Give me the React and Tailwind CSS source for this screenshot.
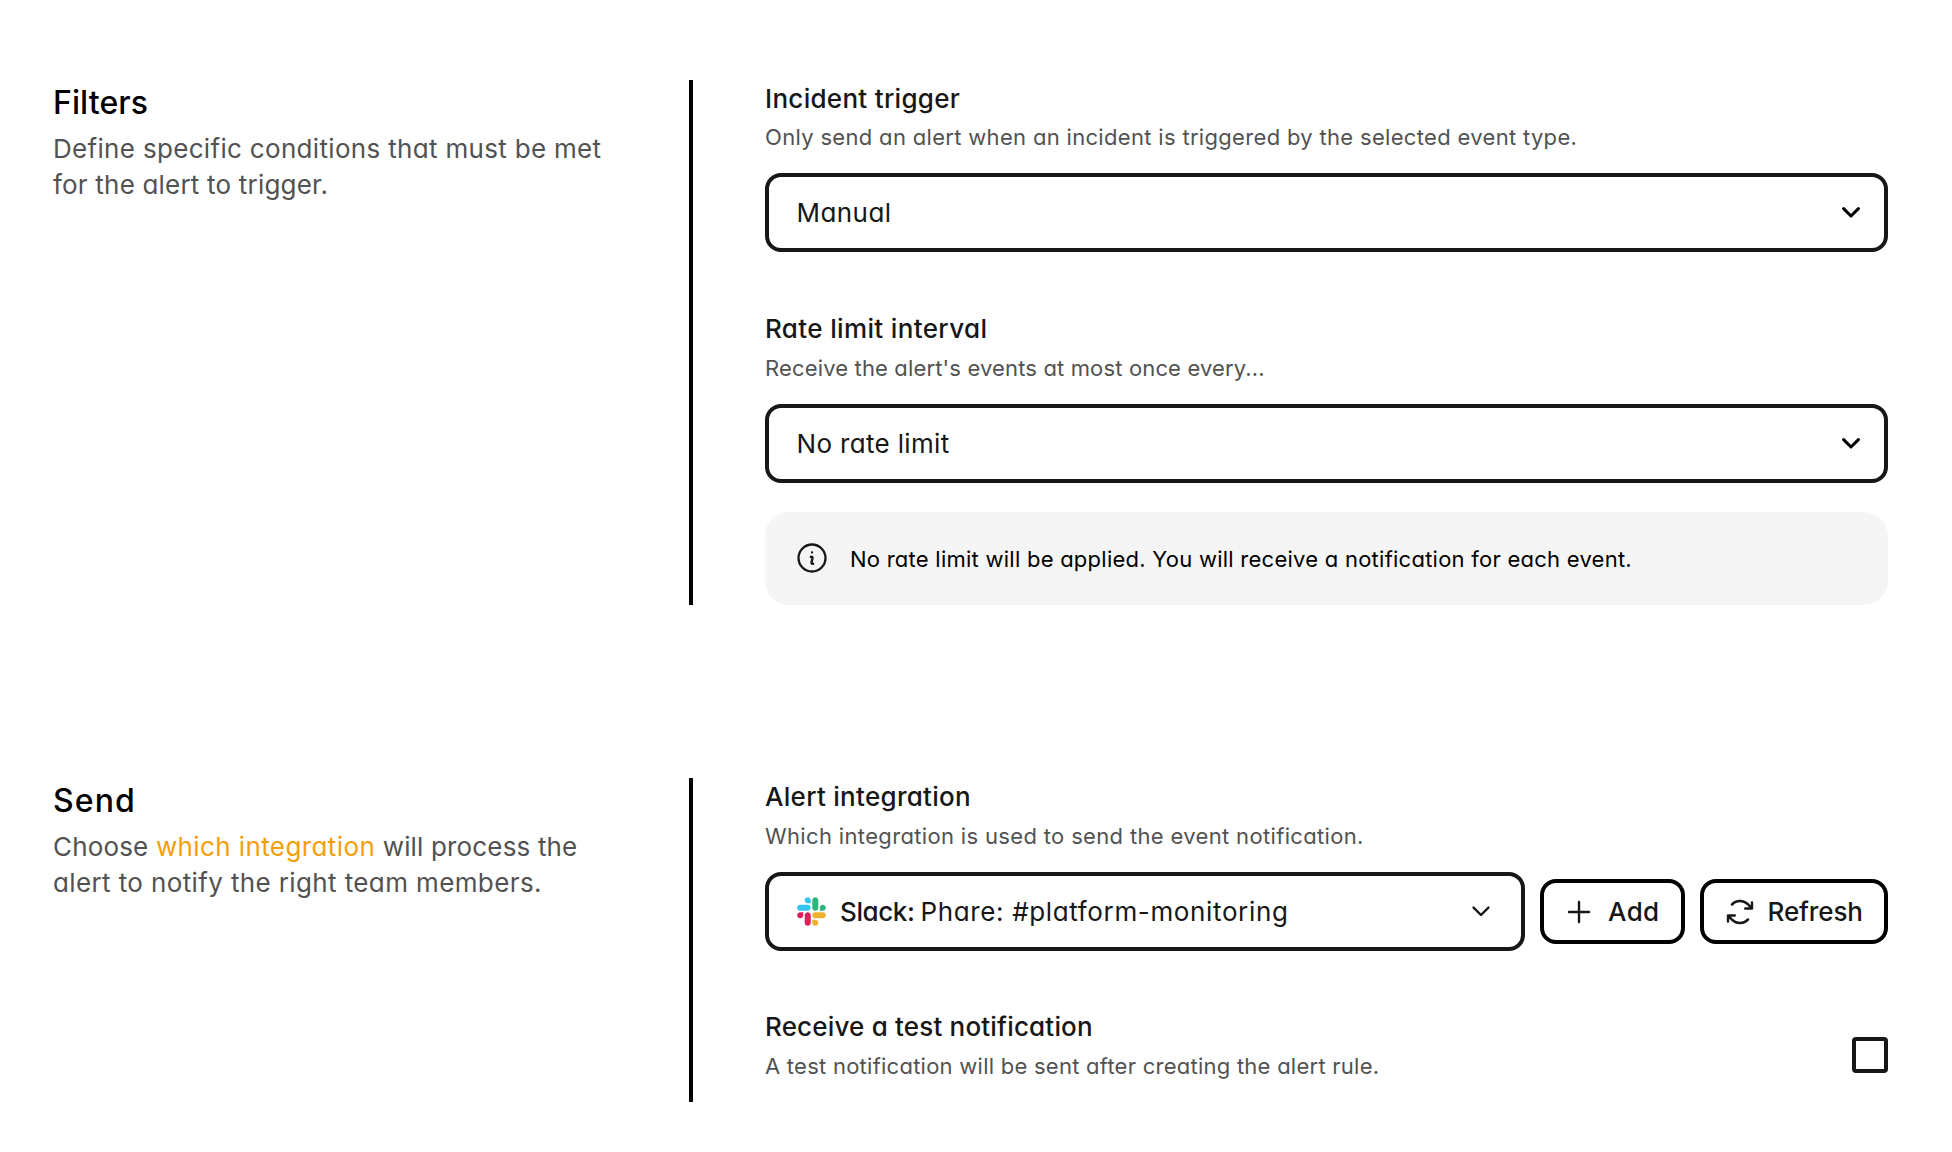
import React from "react";

function Chevron({ className, stroke }) {
  return (
    <svg viewBox="0 0 18 11" className={className} fill="none" stroke="currentColor" strokeWidth={stroke} strokeLinecap="round" strokeLinejoin="round">
      <path d="M1.6 1.6 9 9 16.4 1.6" />
    </svg>
  );
}

function OutlineIcon({ d, className, stroke = 1.8 }) {
  return (
    <svg viewBox="0 0 24 24" className={className} fill="none" stroke="currentColor" strokeWidth={stroke} strokeLinecap="round" strokeLinejoin="round">
      <path d={d} />
    </svg>
  );
}

const INFO = "m11.25 11.25.041-.02a.75.75 0 0 1 1.063.852l-.708 2.836a.75.75 0 0 0 1.063.853l.041-.021M21 12a9 9 0 1 1-18 0 9 9 0 0 1 18 0Zm-9-3.75h.008v.008H12V8.25Z";
const PLUS = "M12 4.5v15m7.5-7.5h-15";
const REFRESH = "M15.9 9.35H21V4.8M8.1 14.65H3v4.55M3 14.65l3.166 3.185A8.25 8.25 0 0 0 18.1 17.55M5.9 6.45A8.25 8.25 0 0 1 17.834 6.165L21 9.35";

function SlackLogo() {
  return (
    <svg viewBox="0 0 127 127" className="size-[29px] shrink-0">
      <path fill="#E01E5A" d="M27.2 80c0 7.3-5.9 13.2-13.2 13.2C6.7 93.2.8 87.3.8 80c0-7.3 5.9-13.2 13.2-13.2h13.2V80zm6.6 0c0-7.3 5.9-13.2 13.2-13.2 7.3 0 13.2 5.9 13.2 13.2v33c0 7.3-5.9 13.2-13.2 13.2-7.3 0-13.2-5.9-13.2-13.2V80z" />
      <path fill="#36C5F0" d="M47 27c-7.3 0-13.2-5.9-13.2-13.2C33.8 6.5 39.7.6 47 .6c7.3 0 13.2 5.9 13.2 13.2V27H47zm0 6.7c7.3 0 13.2 5.9 13.2 13.2 0 7.3-5.9 13.2-13.2 13.2H13.9C6.6 60.1.7 54.2.7 46.9c0-7.3 5.9-13.2 13.2-13.2H47z" />
      <path fill="#2EB67D" d="M99.9 46.9c0-7.3 5.9-13.2 13.2-13.2 7.3 0 13.2 5.9 13.2 13.2 0 7.3-5.9 13.2-13.2 13.2H99.9V46.9zm-6.6 0c0 7.3-5.9 13.2-13.2 13.2-7.3 0-13.2-5.9-13.2-13.2V13.8C66.9 6.5 72.8.6 80.1.6c7.3 0 13.2 5.9 13.2 13.2v33.1z" />
      <path fill="#ECB22E" d="M80.1 99.8c7.3 0 13.2 5.9 13.2 13.2 0 7.3-5.9 13.2-13.2 13.2-7.3 0-13.2-5.9-13.2-13.2V99.8h13.2zm0-6.6c-7.3 0-13.2-5.9-13.2-13.2 0-7.3 5.9-13.2 13.2-13.2h33.1c7.3 0 13.2 5.9 13.2 13.2 0 7.3-5.9 13.2-13.2 13.2H80.1z" />
    </svg>
  );
}

function Section({ title, titleClass, description, className, children }) {
  return (
    <section className={`flex pr-16 pl-[53px] ${className}`}>
      <div className="w-[636px] shrink-0 pt-[3px] whitespace-nowrap">
        <h2 className={`text-[32px] leading-10 font-medium text-black ${titleClass}`}>{title}</h2>
        <div className="mt-2 text-[26px] leading-9 text-[#525252]">{description}</div>
      </div>
      <div className="min-w-0 flex-1 border-l-4 border-black pt-[3px] pl-[72px]">{children}</div>
    </section>
  );
}

function Label({ title, titleClass, help, helpClass }) {
  return (
    <div className="whitespace-nowrap">
      <h3 className={`text-[26px] leading-8 font-medium text-[#171717] ${titleClass}`}>{title}</h3>
      <p className={`text-[22px] leading-8 text-[#525252] ${helpClass}`}>{help}</p>
    </div>
  );
}

function Select({ children }) {
  return (
    <button className="mt-5 flex h-[79px] w-full items-center justify-between rounded-2xl border-4 border-[#171717] pr-6 pl-[27.5px] text-[26px] text-[#171717]">
      {children}
      <Chevron stroke={3} className="h-[11px] w-[18px] text-black" />
    </button>
  );
}

export default function App() {
  return (
    <main className="h-[1152px] w-full bg-white pt-20 font-['Inter',sans-serif] [font-feature-settings:'cv11']">
      <Section
        className="h-[525px]"
        title="Filters"
        titleClass="tracking-[0.1px]"
        description={
          <>
            <p className="tracking-[0.32px]">Define specific conditions that must be met</p>
            <p className="tracking-[0.2px]">for the alert to trigger.</p>
          </>
        }
      >
        <Label
          title="Incident trigger"
          titleClass="tracking-[0.3px]"
          help="Only send an alert when an incident is triggered by the selected event type."
          helpClass="mt-1.5 tracking-[0.32px]"
        />
        <Select>
          <span className="tracking-[0.45px]">Manual</span>
        </Select>
        <div className="mt-[61px]">
          <Label
            title="Rate limit interval"
            titleClass="tracking-[0.36px]"
            help="Receive the alert's events at most once every..."
            helpClass="mt-[7px] tracking-[0.15px]"
          />
        </div>
        <Select>
          <span className="tracking-[0.34px]">No rate limit</span>
        </Select>
        <div className="mt-[29px] flex h-[93px] items-center rounded-3xl bg-[#f5f5f5] pl-[29px]">
          <OutlineIcon d={INFO} stroke={1.55} className="mb-px size-9 shrink-0 text-[#171717]" />
          <p className="ml-5 text-[22px] leading-8 tracking-[0.25px] whitespace-nowrap text-black">
            No rate limit will be applied. You will receive a notification for each event.
          </p>
        </div>
      </Section>

      <Section
        className="mt-[173px] h-[324px]"
        title="Send"
        titleClass="tracking-[1.1px]"
        description={
          <>
            <p className="tracking-[0.16px]">
              Choose <a className="tracking-[0.4px] text-[#f59e0b]">which integration</a> will process the
            </p>
            <p className="tracking-[0.38px]">alert to notify the right team members.</p>
          </>
        }
      >
        <Label
          title="Alert integration"
          titleClass="tracking-[0.29px]"
          help="Which integration is used to send the event notification."
          helpClass="mt-[7px] tracking-[0.34px]"
        />
        <div className="mt-5 flex items-center">
          <button className="flex h-[79px] w-[760px] items-center rounded-2xl border-4 border-[#171717] pr-[31px] pl-[27.5px] text-[26px] whitespace-nowrap text-[#171717]">
            <SlackLogo />
            <span className="ml-[14.5px] font-medium tracking-[-0.4px]">Slack:</span>
            <span className="ml-[6px] tracking-[0.64px]">Phare: #platform-monitoring</span>
            <Chevron stroke={2.4} className="ml-auto h-[11px] w-[18px]" />
          </button>
          <button className="ml-[15px] flex h-[65px] w-[145px] items-center rounded-2xl border-4 border-black pl-[19px] text-[26px] font-medium text-[#171717]">
            <OutlineIcon d={PLUS} className="size-8 shrink-0" />
            <span className="ml-[13px] tracking-[0.4px]">Add</span>
          </button>
          <button className="ml-[15px] flex h-[65px] w-[188px] items-center rounded-2xl border-4 border-black pl-[19.5px] text-[26px] font-medium text-[#171717]">
            <OutlineIcon d={REFRESH} className="size-8 shrink-0" />
            <span className="ml-3 tracking-[-0.1px]">Refresh</span>
          </button>
        </div>
        <div className="mt-[60px] flex items-end justify-between">
          <Label
            title="Receive a test notification"
            titleClass="tracking-[0.18px]"
            help="A test notification will be sent after creating the alert rule."
            helpClass="mt-[7px] tracking-[0.25px]"
          />
          <span role="checkbox" aria-checked="false" className="mb-[9px] size-9 rounded-[4px] border-4 border-[#171717]" />
        </div>
      </Section>
    </main>
  );
}
